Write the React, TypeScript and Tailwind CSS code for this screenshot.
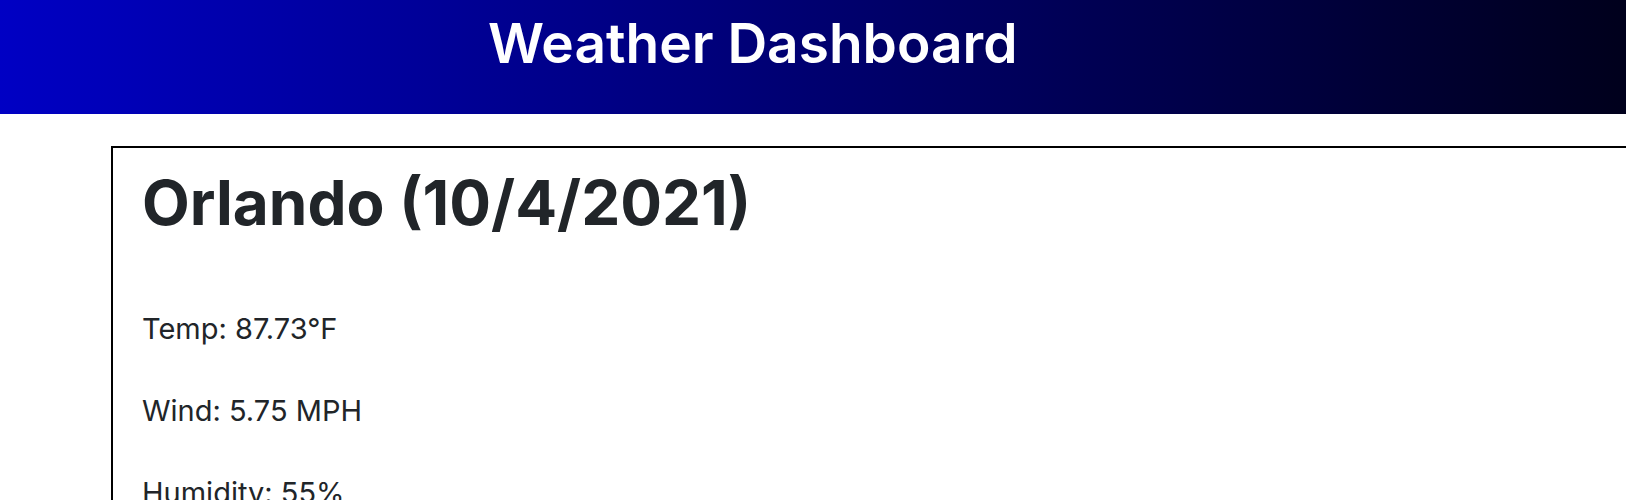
import React from "react";

const stats = [
  { label: "Temp", value: "87.73°F" },
  { label: "Wind", value: "5.75 MPH" },
  { label: "Humidity", value: "55%" },
];

export default function App() {
  return (
    <div className="min-h-[500px] bg-white font-['Inter',sans-serif] text-[#212529]">
      <header className="h-[114px] bg-[linear-gradient(to_right,#0000c4,#00001c)]">
        <h1 className="pl-[488px] pt-[9px] text-[55px] font-semibold leading-[68px] text-white">
          Weather Dashboard
        </h1>
      </header>

      <main className="pl-[111px] pt-[32px]">
        <section className="w-[1700px] border-2 border-black px-[29px] pt-[15px] pb-8">
          <h2 className="text-[62px] font-bold leading-[80px]">Orlando (10/4/2021)</h2>
          <div className="mt-[68px] flex flex-col gap-[46px]">
            {stats.map((s) => (
              <p key={s.label} className="text-[29px] leading-[36px]">
                {s.label}: {s.value}
              </p>
            ))}
          </div>
        </section>
      </main>
    </div>
  );
}
